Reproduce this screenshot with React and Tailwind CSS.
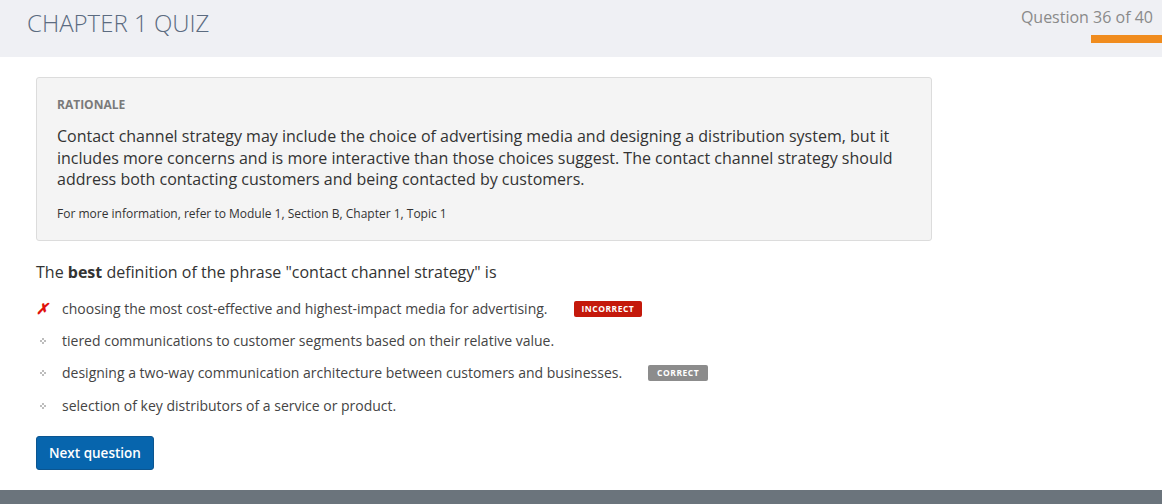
const options = [
  { text: 'choosing the most cost-effective and highest-impact media for advertising.', status: 'incorrect' },
  { text: 'tiered communications to customer segments based on their relative value.' },
  { text: 'designing a two-way communication architecture between customers and businesses.', status: 'correct' },
  { text: 'selection of key distributors of a service or product.' },
]

function Bullet({ status }) {
  if (status === 'incorrect') {
    return <span className="w-[14px] text-[15px] font-bold italic leading-none text-[#e0120c]">✗</span>
  }
  return (
    <span className="flex w-[14px] justify-center">
      <svg width="6" height="6" viewBox="0 0 6 6" fill="#bdbdbd">
        <rect x="2" y="0" width="2" height="2" />
        <rect x="0" y="2" width="2" height="2" />
        <rect x="4" y="2" width="2" height="2" />
        <rect x="2" y="4" width="2" height="2" />
      </svg>
    </span>
  )
}

export default function App() {
  return (
    <div className="flex h-[504px] flex-col bg-white font-['Open_Sans',sans-serif] text-[#333]">
      <header className="flex h-[57px] shrink-0 justify-between bg-[#eff0f4]">
        <h1 className="pl-[27px] pt-[8px] text-[24px] font-light leading-[30px] text-[#5b6b80]">CHAPTER 1 QUIZ</h1>
        <div className="flex flex-col items-end pt-[6px]">
          <div className="pr-[9px] text-[16px] leading-[22px] text-[#8a8a8a]">Question 36 of 40</div>
          <div className="mt-[7px] h-[8px] w-[71px] bg-[#f08c1e]" />
        </div>
      </header>

      <main className="flex-1 px-[36px] pt-[20px]">
        <section className="w-[896px] rounded-[3px] border border-[#dcdcdc] bg-[#f4f4f4] px-[20px] pb-[17px] pt-[18px]">
          <div className="text-[12px] font-bold leading-[18px] text-[#7a7a7a]">RATIONALE</div>
          <p className="mt-[12px] text-[16px] leading-[21.5px] text-[#333]">
            Contact channel strategy may include the choice of advertising media and designing a distribution system, but it includes more concerns and is more interactive than those choices suggest. The contact channel strategy should address both contacting customers and being contacted by customers.
          </p>
          <p className="mt-[14px] text-[12px] leading-[18px] text-[#333]">For more information, refer to Module 1, Section B, Chapter 1, Topic 1</p>
        </section>

        <p className="mt-[20px] text-[16px] leading-[22px]">
          The <b>best</b> definition of the phrase "contact channel strategy" is
        </p>

        <ul className="mt-[16px] flex flex-col gap-[12.4px]">
          {options.map((o) => (
            <li key={o.text} className="flex items-center gap-[12px] text-[14px] leading-[20px] text-[#444]">
              <Bullet status={o.status} />
              <span>{o.text}</span>
              {o.status === 'incorrect' && (
                <span className="ml-[14px] rounded-[2px] bg-[#c4190b] px-[8px] text-[8.5px] font-bold leading-[16px] tracking-[0.5px] text-white">INCORRECT</span>
              )}
              {o.status === 'correct' && (
                <span className="ml-[14px] rounded-[2px] bg-[#8c8c8c] px-[9px] text-[8.5px] font-bold leading-[16px] tracking-[0.5px] text-white">CORRECT</span>
              )}
            </li>
          ))}
        </ul>

        <button className="mt-[20px] h-[34px] rounded-[3px] border border-[#0b5590] bg-[#0765ad] px-[12px] text-[13.5px] font-semibold text-white">
          Next question
        </button>
      </main>

      <footer className="h-[14px] shrink-0 bg-[#6b747c]" />
    </div>
  )
}
